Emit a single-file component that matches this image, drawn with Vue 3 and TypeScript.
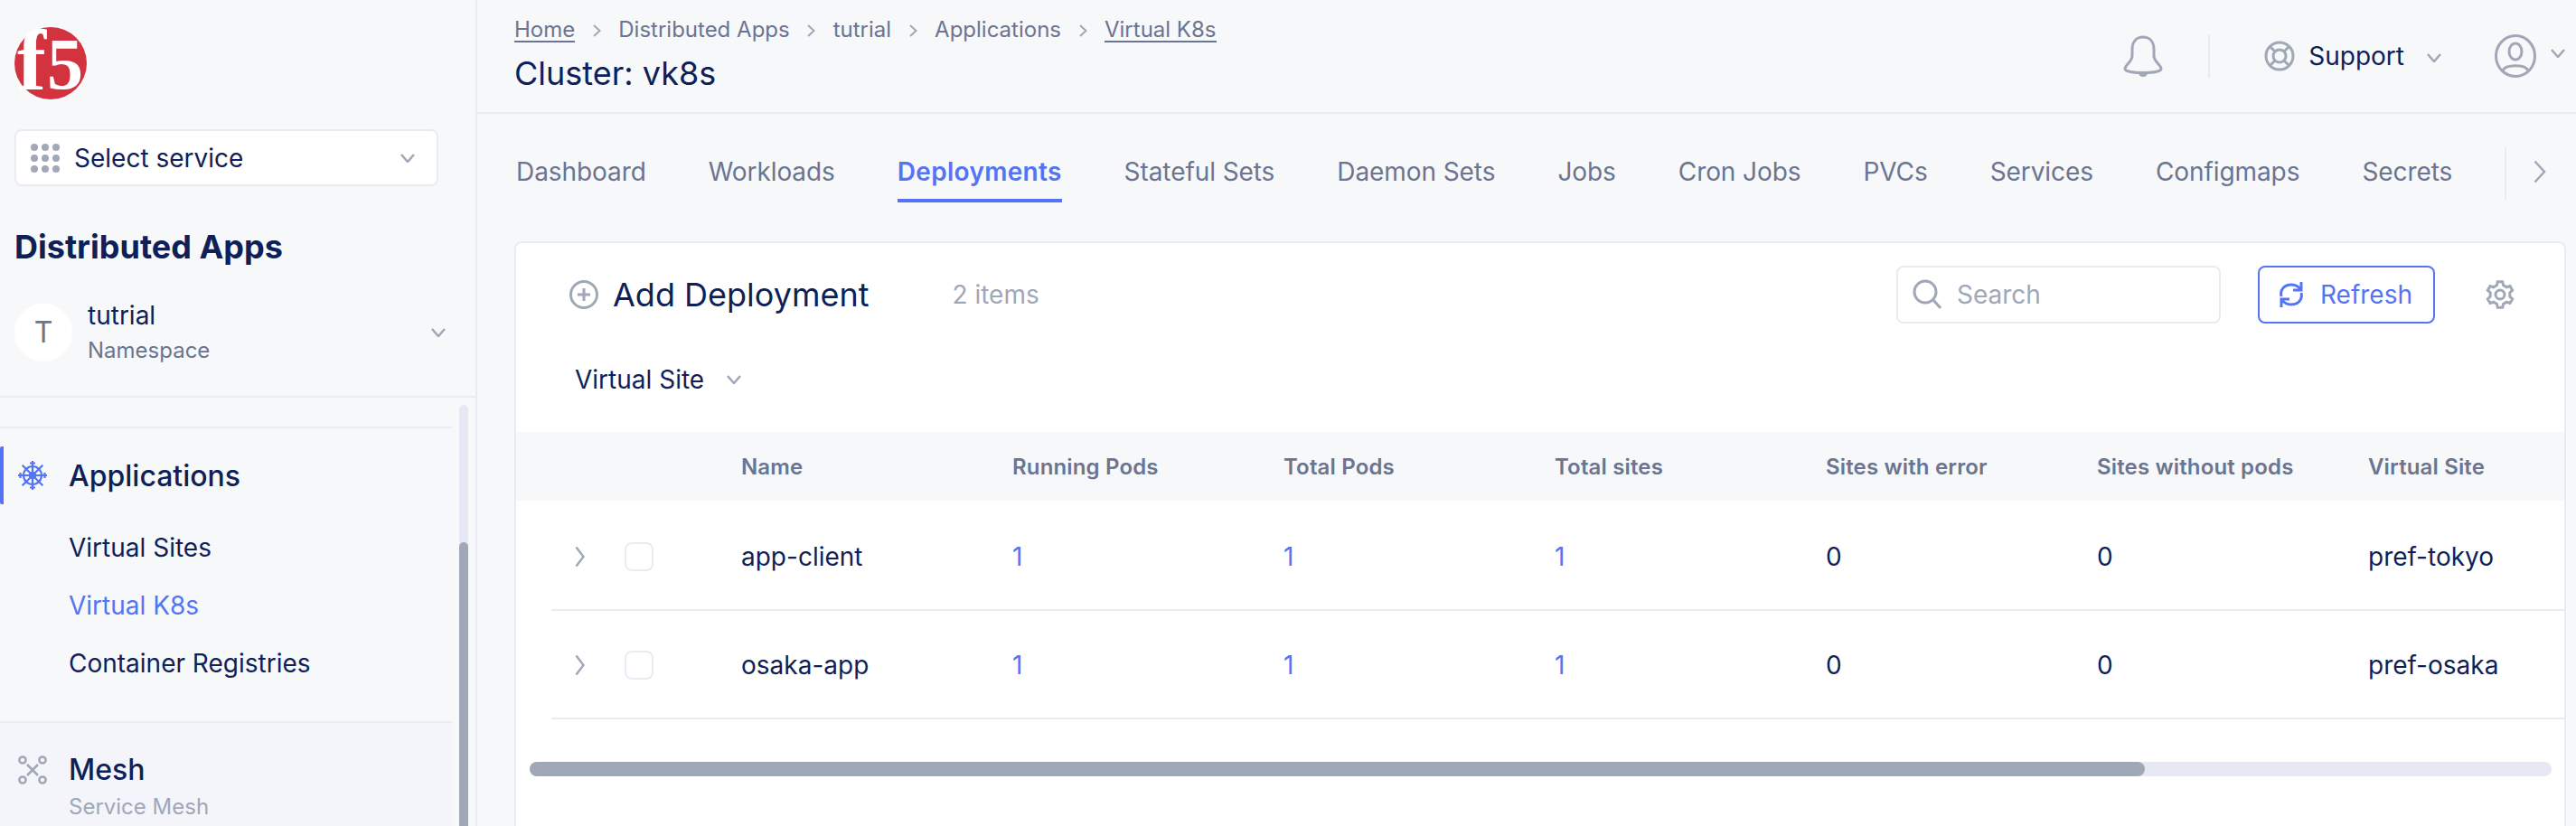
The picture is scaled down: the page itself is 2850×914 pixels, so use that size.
<script setup lang="ts">
interface Row { name: string; running: number; total: number; sites: number; err: number; noPods: number; site: string }
const crumbs: string[] = ['Home', 'Distributed Apps', 'tutrial', 'Applications', 'Virtual K8s']
const tabs: string[] = ['Dashboard', 'Workloads', 'Deployments', 'Stateful Sets', 'Daemon Sets', 'Jobs', 'Cron Jobs', 'PVCs', 'Services', 'Configmaps', 'Secrets']
const heads: string[] = ['Name', 'Running Pods', 'Total Pods', 'Total sites', 'Sites with error', 'Sites without pods', 'Virtual Site']
const rows: Row[] = [
  { name: 'app-client', running: 1, total: 1, sites: 1, err: 0, noPods: 0, site: 'pref-tokyo' },
  { name: 'osaka-app', running: 1, total: 1, sites: 1, err: 0, noPods: 0, site: 'pref-osaka' }
]
const subItems: string[] = ['Virtual Sites', 'Virtual K8s', 'Container Registries']
const dots: number[] = [0, 1, 2, 3, 4, 5, 6, 7, 8]

function gearPath(): string {
  const n = 6
  const pts: string[] = []
  for (let i = 0; i < n; i++) {
    const a = (i / n) * Math.PI * 2 - Math.PI / 2
    const w = Math.PI / n
    const p = (r: number, t: number) => `${(16 + r * Math.cos(t)).toFixed(2)} ${(16 + r * Math.sin(t)).toFixed(2)}`
    pts.push(`${i === 0 ? 'M' : 'L'}${p(11, a - w * 0.62)}`, `L${p(14.5, a - w * 0.36)}`, `L${p(14.5, a + w * 0.36)}`, `L${p(11, a + w * 0.62)}`)
  }
  return pts.join(' ') + ' Z'
}
const gear = gearPath()
</script>

<template>
  <div class="page">
    <aside class="side">
      <svg class="logo" viewBox="0 0 80 80" width="80" height="80">
        <circle cx="40" cy="40" r="40" fill="#d2333f" />
        <text x="3" y="69" class="logo-f">f</text>
        <text x="36" y="68" class="logo-5">5</text>
      </svg>
      <div class="select">
        <div class="dots"><i v-for="d in dots" :key="d"></i></div>
        <span class="select-text">Select service</span>
        <svg class="chev" viewBox="0 0 16 10" width="16" height="10"><path d="M1 1l7 8 7-8" /></svg>
      </div>
      <h2 class="app-title">Distributed Apps</h2>
      <div class="ns">
        <div class="avatar">T</div>
        <div class="ns-text">
          <div class="ns-name">tutrial</div>
          <div class="ns-label">Namespace</div>
        </div>
        <svg class="chev" viewBox="0 0 16 10" width="16" height="10"><path d="M1 1l7 8 7-8" /></svg>
      </div>
      <div class="scroller">
        <nav class="nav">
          <section class="nav-active">
            <div class="nav-head">
              <svg viewBox="0 0 32 32" width="32" height="32" class="helm">
                <circle cx="16" cy="16" r="10" />
                <circle cx="16" cy="16" r="3.2" />
                <path d="M16 0v32M0 16h32M4.700 4.700l22.600 22.600M27.300 4.700L4.700 27.300" />
                <path d="M13 2.500h6M13 29.500h6M2.500 13v6M29.500 13v6" />
              </svg>
              <span>Applications</span>
            </div>
            <div class="subs">
              <a v-for="s in subItems" :key="s" :class="{ on: s === 'Virtual K8s' }">{{ s }}</a>
            </div>
          </section>
          <section class="nav-mesh">
            <svg viewBox="0 0 32 32" width="32" height="32" class="mesh">
              <circle cx="5" cy="5" r="3.600" /><circle cx="27" cy="5" r="3.600" />
              <circle cx="5" cy="27" r="3.600" /><circle cx="27" cy="27" r="3.600" />
              <path d="M10 10l12 12M22 10L10 22" />
            </svg>
            <div>
              <div class="mesh-title">Mesh</div>
              <div class="mesh-sub">Service Mesh</div>
            </div>
          </section>
        </nav>
        <div class="vbar"><div class="vthumb"></div></div>
      </div>
    </aside>

    <main class="main">
      <header class="top">
        <div class="top-left">
          <div class="crumbs">
            <template v-for="(c, i) in crumbs" :key="c">
              <svg v-if="i > 0" viewBox="0 0 9 14" width="9" height="14" class="crumb-sep"><path d="M1 1l6.500 6L1 13" /></svg>
              <a :class="{ link: i === 0 || i === crumbs.length - 1 }">{{ c }}</a>
            </template>
          </div>
          <h1 class="title">Cluster: vk8s</h1>
        </div>
        <div class="top-right">
          <svg viewBox="0 0 44 46" width="44" height="46" class="ic bell">
            <path d="M22 2C14 2 10 8 10 16v7c0 6-8 10-8 14 0 3 10 4.500 20 4.500s20-1.500 20-4.500c0-4-8-8-8-14v-7C34 8 30 2 22 2z" />
            <path class="fill" d="M17 42h10a5 4 0 0 1-10 0z" />
          </svg>
          <div class="vline"></div>
          <svg viewBox="0 0 34 34" width="34" height="34" class="ic support">
            <circle cx="17" cy="17" r="15" />
            <circle cx="17" cy="17" r="7" />
            <path d="M7 7l5 5M27 7l-5 5M7 27l5-5M27 27l-5-5" />
          </svg>
          <span class="support-text">Support</span>
          <svg class="chev chev-s" viewBox="0 0 16 10" width="16" height="10"><path d="M1 1l7 8 7-8" /></svg>
          <svg viewBox="0 0 46 48" width="46" height="48" class="ic user">
            <ellipse cx="23" cy="24" rx="21.500" ry="22.500" />
            <ellipse cx="23" cy="19" rx="7" ry="9" />
            <path d="M9 40c3-7 25-7 28 0" />
          </svg>
          <svg class="chev chev-u" viewBox="0 0 16 10" width="16" height="10"><path d="M1 1l7 8 7-8" /></svg>
        </div>
      </header>

      <div class="tabs">
        <div class="tab-list">
          <a v-for="t in tabs" :key="t" class="tab" :class="{ active: t === 'Deployments' }">{{ t }}</a>
        </div>
        <div class="tab-more">
          <svg viewBox="0 0 14 26" width="14" height="26" class="more-arrow"><path d="M1.500 1.500L12 13 1.500 24.500" /></svg>
        </div>
      </div>

      <div class="card">
        <div class="bar">
          <svg viewBox="0 0 32 32" width="32" height="32" class="ic add">
            <circle cx="16" cy="16" r="14.500" /><path d="M16 9v14M9 16h14" />
          </svg>
          <span class="add-text">Add Deployment</span>
          <span class="count">2 items</span>
          <div class="search">
            <svg viewBox="0 0 32 34" width="32" height="34" class="ic">
              <circle cx="14" cy="14" r="12" /><path d="M23 23l8 9" />
            </svg>
            <span>Search</span>
          </div>
          <button class="refresh" type="button">
            <svg viewBox="0 0 30 32" width="30" height="32" class="refresh-ic">
              <path d="M4 18C2 10 8 5 15 5c4 0 8 2 10 5M26 2v9h-9" />
              <path d="M26 14c2 8-4 13-11 13-4 0-8-2-10-5M4 30v-9h9" />
            </svg>
            <span>Refresh</span>
          </button>
          <svg viewBox="0 0 32 32" width="32" height="32" class="ic gear">
            <path :d="gear" /><circle cx="16" cy="16" r="5" />
          </svg>
        </div>
        <div class="filter">
          <span>Virtual Site</span>
          <svg class="chev" viewBox="0 0 16 10" width="16" height="10"><path d="M1 1l7 8 7-8" /></svg>
        </div>
        <div class="thead">
          <span v-for="h in heads" :key="h">{{ h }}</span>
        </div>
        <div class="tbody">
          <div v-for="r in rows" :key="r.name" class="row">
            <svg viewBox="0 0 11 24" width="11" height="24" class="expand"><path d="M1.500 1.500L9.500 12 1.500 22.500" /></svg>
            <div class="check"></div>
            <span>{{ r.name }}</span>
            <span class="num">{{ r.running }}</span>
            <span class="num">{{ r.total }}</span>
            <span class="num">{{ r.sites }}</span>
            <span>{{ r.err }}</span>
            <span>{{ r.noPods }}</span>
            <span>{{ r.site }}</span>
          </div>
        </div>
        <div class="hbar"><div class="hthumb"></div></div>
      </div>
    </main>
  </div>
</template>

<style scoped>
.page {
  display: flex;
  width: 2850px;
  height: 914px;
  overflow: hidden;
  background: #f7f8fa;
  color: #0f1f57;
  font-family: Inter, "Liberation Sans", sans-serif;
  font-size: 28px;
}
.side {
  width: 528px;
  flex: none;
  box-sizing: border-box;
  border-right: 2px solid #e9ebf3;
  display: flex;
  flex-direction: column;
  height: 914px;
}
.logo { display: block; margin: 30px 0 0 16px; flex: none; overflow: visible; }
.logo-f, .logo-5 {
  font-family: "Liberation Serif", serif;
  font-weight: 700;
  fill: #fff;
}
.logo-f { font-size: 96px; }
.logo-5 { font-size: 80px; }
.select {
  box-sizing: border-box;
  flex: none;
  margin: 33px 0 0 16px;
  width: 469px;
  height: 63px;
  background: #fff;
  border: 2px solid #e9ebf3;
  border-radius: 8px;
  display: flex;
  align-items: center;
  padding: 0 24px 0 16px;
}
.dots {
  display: grid;
  grid-template-columns: repeat(3, 8px);
  gap: 4px;
  margin-right: 16px;
}
.dots i { width: 8px; height: 8px; border-radius: 50%; background: #a0a7b7; }
.select-text { flex: 1; }
.chev { flex: none; fill: none; stroke: #a0a7b7; stroke-width: 2.500; }
.app-title {
  margin: 42px 0 0 16px;
  font-size: 36px;
  line-height: 50px;
  font-weight: 700;
  flex: none;
}
.ns {
  display: flex;
  align-items: center;
  flex: none;
  height: 64px;
  margin-top: 38px;
  padding: 0 33px 0 16px;
  padding-bottom: 38px;
  border-bottom: 2px solid #e9ebf3;
}
.avatar {
  width: 64px;
  height: 64px;
  border-radius: 50%;
  background: #fff;
  color: #6b7490;
  font-size: 32px;
  line-height: 64px;
  text-align: center;
  flex: none;
}
.ns-text { flex: 1; margin-left: 17px; }
.ns-name { line-height: 36px; margin-top: -2px; }
.ns-label { font-size: 24px; line-height: 32px; margin-top: 5px; color: #6b7490; }
.scroller { flex: 1; display: flex; min-height: 0; }
.nav { width: 500px; flex: none; margin-top: 32px; border-top: 2px solid #e9ebf3; }
.nav-active { height: 326px; box-sizing: border-box; padding-top: 20px; border-bottom: 2px solid #e9ebf3; }
.nav-head {
  display: flex;
  align-items: center;
  height: 64px;
  border-left: 4px solid #5474f5;
  border-radius: 2px;
  padding-left: 16px;
  font-size: 32px;
  font-weight: 500;
}
.nav-head span { margin-left: 24px; }
.helm { fill: none; stroke: #5474f5; stroke-width: 2.200; }
.subs { display: flex; flex-direction: column; margin-top: 16px; padding-left: 76px; }
.subs a { height: 64px; line-height: 64px; }
.subs a.on { color: #5474f5; }
.nav-mesh { display: flex; background: #f3f5fa; padding: 32px 0 0 20px; height: 120px; }
.mesh { fill: none; stroke: #a0a7b7; stroke-width: 2.500; margin-top: 4px; flex: none; }
.mesh-title { margin-left: 24px; font-size: 32px; font-weight: 500; line-height: 40px; }
.mesh-sub { margin: 5px 0 0 24px; font-size: 24px; line-height: 32px; color: #a0a7b7; }
.vbar { margin: 8px 0 0 8px; width: 10px; height: 600px; border-radius: 5px; background: #e6e9f3; padding-top: 152px; box-sizing: border-box; }
.vthumb { height: 100%; border-radius: 5px; background: #a0a7b7; }

.main { flex: 1; min-width: 0; display: flex; flex-direction: column; }
.top {
  box-sizing: border-box;
  height: 126px;
  flex: none;
  border-bottom: 2px solid #e9ebf3;
  padding: 0 12px 0 41px;
  display: flex;
  align-items: center;
  justify-content: space-between;
}
.top-left { align-self: flex-start; padding-top: 18px; }
.crumbs { display: flex; align-items: flex-start; font-size: 24px; line-height: 30px; color: #6b7490; }
.crumbs a { box-sizing: border-box; height: 29px; }
.crumbs a.link { border-bottom: 2px solid #6b7490; }
.crumb-sep { margin: 9px 19.500px 0; fill: none; stroke: #a0a7b7; stroke-width: 2; }
.title { margin: 12px 0 0; font-size: 36px; line-height: 44px; font-weight: 400; }
.top-right { display: flex; align-items: center; }
.ic { fill: none; stroke: #a0a7b7; stroke-width: 3; flex: none; }
.ic .fill { fill: #a0a7b7; stroke: none; }
.vline { width: 2px; height: 48px; background: #e9ebf3; margin: 0 60px 0 50px; }
.support-text { margin-left: 15px; }
.chev-s { margin: 4px 59px 0 25px; }
.chev-u { margin: -6px 0 0 16px; }

.tabs { display: flex; flex: none; padding: 44px 0 0 43px; height: 98px; box-sizing: border-box; }
.tab-list { display: flex; gap: 69px; flex: 1; min-width: 0; letter-spacing: -0.08px; }
.tab {
  color: #6b7490;
  line-height: 40px;
  height: 54px;
  white-space: nowrap;
  box-sizing: border-box;
  padding-bottom: 10px;
}
.tab.active { color: #5474f5; font-weight: 600; letter-spacing: 0.3px; border-bottom: 4px solid #5474f5; }
.tab-more {
  box-sizing: border-box;
  width: 79px;
  height: 58px;
  margin-top: -7px;
  flex: none;
  border-left: 2px solid #e9ebf3;
  padding: 14px 0 0 30px;
}
.more-arrow { fill: none; stroke: #a0a7b7; stroke-width: 2.500; display: block; }

.card {
  margin: 43px 11px 0 41px;
  flex: 1;
  min-height: 0;
  background: #fff;
  border: 2px solid #e9ebf3;
  border-bottom: 0;
  border-radius: 8px 8px 0 0;
  overflow: hidden;
}
.bar { display: flex; align-items: center; padding: 25px 55px 0 59px; }
.add-text { font-size: 36px; line-height: 44px; margin-left: 16px; }
.count { color: #a0a7b7; margin-left: 92px; flex: 1; }
.search {
  box-sizing: border-box;
  width: 359px;
  height: 64px;
  border: 2px solid #e9ebf3;
  border-radius: 8px;
  display: flex;
  align-items: center;
  padding-left: 16px;
  color: #a0a7b7;
}
.search span { margin-left: 17px; }
.refresh {
  box-sizing: border-box;
  width: 196px;
  height: 64px;
  margin: 0 56px 0 41px;
  background: #fff;
  border: 2px solid #5474f5;
  border-radius: 8px;
  color: #5474f5;
  font: inherit;
  display: flex;
  align-items: center;
  padding: 0 0 0 20px;
}
.refresh span { margin-left: 17px; }
.refresh-ic { fill: none; stroke: #5474f5; stroke-width: 3; flex: none; }
.filter { display: flex; align-items: center; gap: 25px; height: 40px; margin: 42px 0 0 65px; }
.thead {
  display: grid;
  grid-template-columns: repeat(6, 300px) 1fr;
  align-items: center;
  height: 76px;
  margin-top: 38px;
  padding-left: 249px;
  background: #f7f8fa;
  color: #6b7490;
  font-size: 24px;
  font-weight: 600;
  letter-spacing: 0.15px;
}
.tbody { margin-top: 2px; }
.row {
  box-sizing: border-box;
  height: 120px;
  margin-left: 39px;
  padding: 2px 0 0 26px;
  border-bottom: 2px solid #e9ebf3;
  display: grid;
  grid-template-columns: 55px 129px repeat(6, 300px) 1fr;
  align-items: center;
}
.expand { fill: none; stroke: #a0a7b7; stroke-width: 2.500; }
.check { box-sizing: border-box; width: 32px; height: 32px; border: 2px solid #e9ebf3; border-radius: 8px; }
.num { color: #5474f5; }
.hbar { margin: 47px 0 0 15px; width: 2237px; height: 16px; border-radius: 8px; background: #e6e9f3; }
.hthumb { width: 1787px; height: 16px; border-radius: 8px; background: #a0a7b7; }
</style>
